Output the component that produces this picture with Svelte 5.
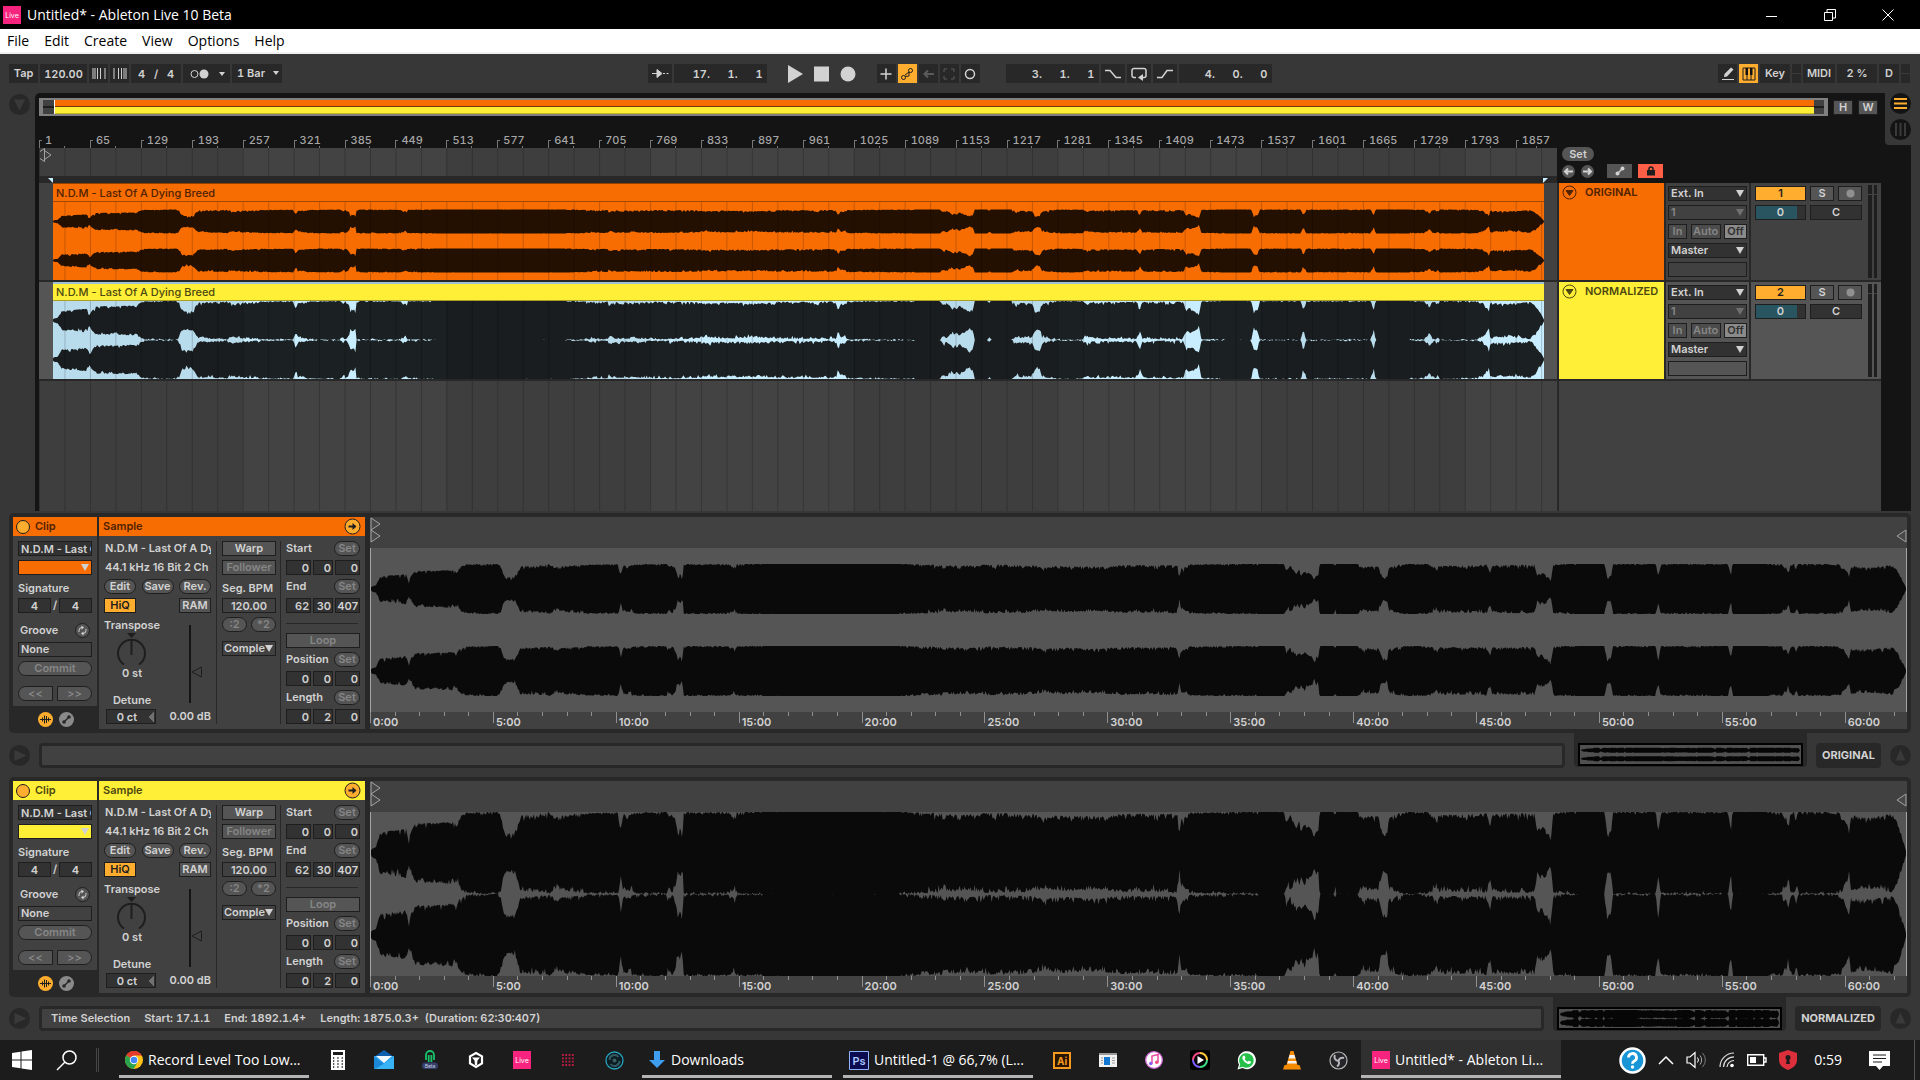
<script lang="ts">
    type ClipColor = 'orange' | 'yellow';

    interface Track {
        id: number;
        name: string;
        color: ClipColor;
        peak: number;
        status: string[];
    }

    const CLIP_NAME = 'N.D.M - Last Of A Dying Breed';

    const tracks: Track[] = [
        { id: 1, name: 'ORIGINAL', color: 'orange', peak: 25, status: [] },
        {
            id: 2,
            name: 'NORMALIZED',
            color: 'yellow',
            peak: 41,
            status: ['Time Selection', 'Start: 17.1.1', 'End: 1892.1.4+', 'Length: 1875.0.3+  (Duration: 62:30:407)']
        }
    ];

    const bars = Array.from({ length: 30 }, (_, i) => 1 + i * 64);
    const minutes = Array.from({ length: 63 }, (_, i) => i);
    const menu = ['File', 'Edit', 'Create', 'View', 'Options', 'Help'];

    // loudness envelope of the recording: [position, level]
    const END = 3086;
    const envelope = [
        [0, .05], [3, .1], [10, .13], [18, .5], [50, .54], [70, .6], [76, .3], [80, .5], [90, .72], [130, .72],
        [165, .76], [172, .68], [178, .87], [190, .97], [255, 1], [262, .9], [266, .55], [275, .47], [290, .5],
        [296, .75], [300, .92], [330, .93], [360, .98], [370, .86], [395, .93], [430, .97], [497, .98], [503, .6],
        [507, .93], [520, .9], [525, .97], [594, 1], [600, .88], [606, .98], [612, .85], [616, .52], [622, .6],
        [626, .42], [628, .97], [640, .99], [720, .98], [730, .87], [735, .98], [790, 1], [870, 1], [1060, 1],
        [1100, .97], [1148, .96], [1152, .8], [1156, .93], [1200, .92], [1240, .96], [1300, .95], [1335, .93],
        [1350, .85], [1380, .91], [1400, .91], [1450, .88], [1470, .88], [1500, .94], [1548, .95], [1563, .92],
        [1608, .96], [1621, .95], [1625, .52], [1629, .85], [1640, .87], [1644, .97], [1698, .98], [1788, 1],
        [1836, 1], [1843, .78], [1848, .93], [1856, .75], [1863, .65], [1866, .8], [1870, .6], [1876, .8],
        [1883, .65], [1893, .55], [1897, .4], [1901, .6], [1904, .45], [1907, 1], [1935, 1], [1938, .92],
        [1941, 1], [1984, 1], [1995, .83], [2003, .9], [2026, .88], [2033, .5], [2043, .48], [2046, .88],
        [2063, .95], [2088, 1], [2131, .98], [2138, .87], [2142, .82], [2148, .94], [2198, .93], [2243, .96],
        [2250, .62], [2254, .94], [2340, .96], [2345, .55], [2353, .65], [2363, .55], [2372, .36], [2377, .97],
        [2398, .98], [2428, 1], [2480, 1], [2485, .48], [2493, .54], [2497, .99], [2583, 1], [2588, .54],
        [2593, .99], [2638, .99], [2728, 1], [2734, .53], [2737, 1], [2808, 1], [2818, .98], [2838, .97],
        [2841, .85], [2845, .88], [2849, .65], [2854, .95], [2861, .98], [2866, .87], [2870, 1], [2948, .98],
        [2958, .94], [2965, .7], [2968, .7], [2972, .45], [2975, .92], [2993, .86], [3028, .87], [3058, .95],
        [3068, .75], [3078, .4], [END, .03]
    ];

    const noise = (n: number) => {
        const v = Math.sin(n * 12.9898) * 43758.5453;
        return v - Math.floor(v);
    };

    const level = (pos: number) => {
        let i = 1;
        while (i < envelope.length - 1 && envelope[i][0] < pos) i++;
        const [x0, y0] = envelope[i - 1];
        const [x1, y1] = envelope[i];
        return y0 + (y1 - y0) * Math.min(1, (pos - x0) / (x1 - x0));
    };

    // two channels in a box of 164 units, each with 41 units either side of its centre
    const buildWave = (points: number, peak: number) => {
        const edge = (center: number, dir: number, seed: number) =>
            Array.from({ length: points + 1 }, (_, i) => {
                const base = level((i / points) * END);
                const rough = base > .999 ? .03 : base > .97 ? .1 : base > .3 ? .2 : .02;
                const amp = Math.min(1, base + .02 - noise(i + seed) * noise(i * 3 + seed) * rough);
                return `${i} ${(center + dir * amp * peak).toFixed(1)}`;
            });
        const channel = (center: number, seed: number) =>
            `M${edge(center, -1, seed).join('L')}L${edge(center, 1, seed + 501).reverse().join('L')}Z`;

        return channel(41, 7) + channel(123, 1907);
    };

    const clipWaves = tracks.map((t) => buildWave(1218, t.peak));
    const sampleWaves = tracks.map((t) => buildWave(1536, t.peak));
    const thumbWaves = tracks.map((t) => buildWave(220, t.peak));
</script>

{#snippet waveform(d: string, width: number)}
    <svg class="wave" viewBox="0 0 {width} 164" preserveAspectRatio="none" aria-hidden="true">
        <path {d} />
    </svg>
{/snippet}

{#snippet grid(from: number, width: number)}
    <svg class="grid" viewBox="{from} 0 {width} 10" preserveAspectRatio="none" aria-hidden="true">
        {#each [0, 2, 4, 6] as n}
            <rect class="band" x={n * 203.7} y="0" width="203.7" height="10" opacity=".07" />
        {/each}
        {#each Array(60) as _, i}
            <rect x={i * 25.46} y="0" width="1" height="10" opacity=".2" />
        {/each}
    </svg>
{/snippet}

{#snippet picker(label: string, value: string, cls = '')}
    <span class="picker {cls}">
        <select aria-label={label}><option>{value}</option></select>
    </span>
{/snippet}

{#snippet triple(label: string, values: string[])}
    <div class="triple">
        {#each values as value, i}
            <input class="field" aria-label="{label} {i + 1}" {value} />
        {/each}
    </div>
{/snippet}

{#snippet heading(label: string)}
    <div class="line between">
        <span>{label}</span>
        <button class="pill off set">Set</button>
    </div>
{/snippet}

{#snippet live()}
    <svg width="18" height="18" viewBox="0 0 18 18" aria-hidden="true">
        <rect width="18" height="18" fill="#f7247f" />
        <text x="9" y="12" text-anchor="middle" font-size="7" font-family="Inter, sans-serif" fill="#fff">Live</text>
    </svg>
{/snippet}

<div class="app">
    <header class="titlebar">
        {@render live()}
        <h1>Untitled* - Ableton Live 10 Beta</h1>
        <button aria-label="Minimize"><svg width="12" height="12"><path d="M0 7.500h11" /></svg></button>
        <button aria-label="Restore"><svg width="12" height="12"><path d="M.5 3.500h8v8h-8zM3 3V.500h8.500V9H9" /></svg></button>
        <button aria-label="Close"><svg width="12" height="12"><path d="M.5.5l11 11M11.500.5l-11 11" /></svg></button>
    </header>

    <nav class="menubar">
        {#each menu as item}
            <button>{item}</button>
        {/each}
    </nav>

    <section class="toolbar">
        <div class="group">
            <button class="tool w29">Tap</button>
            <input class="tool w47 center" aria-label="Tempo" value="120.00" />
            <button class="tool w19" aria-label="Nudge down"><svg width="14" height="13"><path d="M1 1v11M3 1v11M5.500 1v11M8.500 1v11M13 1v11" /></svg></button>
            <button class="tool w19" aria-label="Nudge up"><svg width="14" height="13"><path d="M1 1v11M5.500 1v11M8.500 1v11M11 1v11M13 1v11" /></svg></button>
            <input class="tool w50 center" aria-label="Time signature" value="4   /   4" />
            <button class="tool w47 metro" aria-label="Metronome">
                <svg width="36" height="10" viewBox="0 0 36 10">
                    <circle cx="4.500" cy="5" r="3.500" fill="none" /><circle cx="14" cy="5" r="4.500" fill="#d2d2d2" stroke="none" />
                    <path d="M29 3h6l-3 4z" fill="#d2d2d2" stroke="none" />
                </svg>
            </button>
            <span class="picker flat w50"><select aria-label="Quantization"><option>1 Bar</option></select></span>
        </div>

        <div class="group">
            <button class="tool w24" aria-label="Follow"><svg width="18" height="11"><path d="M1 5.500h7M12 5.500h2M15.500 5.500h2" /><path d="M6 1.500l5 4-5 4z" fill="#d2d2d2" /></svg></button>
            <input class="tool w93 number" aria-label="Arrangement position" value="17.      1.      1" />
            <div class="transport">
                <button aria-label="Play"><svg width="16" height="18"><path d="M0 0l15 9-15 9z" /></svg></button>
                <button aria-label="Stop"><svg width="16" height="18"><path d="M0 1.500h15v15H0z" /></svg></button>
                <button aria-label="Record"><svg width="16" height="18"><circle cx="8" cy="9" r="7.500" /></svg></button>
            </div>
            <button class="tool w19" aria-label="Overdub"><svg width="12" height="12"><path d="M6 .5v11M.5 6h11" stroke-width="1.500" /></svg></button>
            <button class="tool w19 lit" aria-label="Automation arm"><svg width="14" height="14"><circle cx="3.500" cy="10.500" r="2" fill="none" /><circle cx="10.500" cy="3.500" r="2" fill="none" /><path d="M5 9.500L9 9V6l.5-1M5 8l4-3" fill="none" /></svg></button>
            <button class="tool w19 dim" aria-label="Re-enable automation"><svg width="11" height="10"><path d="M2 5h9M5 1.500L1.500 5 5 8.500" fill="none" stroke-width="2" /></svg></button>
            <button class="tool w19 dim" aria-label="Capture"><svg width="12" height="12"><path d="M1 4V1h3M8 1h3v3M11 8v3H8M4 11H1V8" fill="none" /></svg></button>
            <button class="tool w19" aria-label="Session record"><svg width="12" height="12"><circle cx="6" cy="6" r="4.500" fill="none" stroke-width="1.500" /></svg></button>
            <input class="tool w93 number loop-start" aria-label="Loop start" value="3.      1.      1" />
            <button class="tool w24" aria-label="Punch in"><svg width="16" height="10"><path d="M0 1.500h5l6 7h5" fill="none" stroke-width="1.500" /></svg></button>
            <button class="tool w24" aria-label="Loop"><svg width="16" height="14"><path d="M5 10.500H2.500a2 2 0 0 1-1.500-2V3a2 2 0 0 1 2-1.500h10A2 2 0 0 1 15 3v5.500a2 2 0 0 1-2 2h-3" fill="none" stroke-width="1.500" /><path d="M12 7l-5 3.500L12 14z" fill="#d2d2d2" stroke="none" /></svg></button>
            <button class="tool w24" aria-label="Punch out"><svg width="16" height="10"><path d="M0 8.500h5l5-7h6" fill="none" stroke-width="1.500" /></svg></button>
            <input class="tool w93 number" aria-label="Loop length" value="4.      0.      0" />
        </div>

        <div class="group end">
            <button class="tool w19" aria-label="Draw mode"><svg width="14" height="13"><path d="M1 12.500h12" /><path d="M3 10l.5-3L10 .5l2.500 2L6 9.500z" fill="#d2d2d2" stroke="none" /></svg></button>
            <button class="tool w19 lit" aria-label="Computer MIDI keyboard"><svg width="14" height="14"><path d="M1 1h12v12H1zM5 8v5M9 8v5" fill="none" /><path d="M3.500 1h2.500v7H3.500zM8 1h2.500v7H8z" fill="#111" stroke="none" /></svg></button>
            <button class="tool w30">Key</button>
            <span class="tool lamp"></span>
            <button class="tool w32">MIDI</button>
            <span class="tool w40">2 %</span>
            <button class="tool w20">D</button>
            <span class="tool lamp"></span>
        </div>
    </section>

    <main>
        <section class="arrangement">
            <aside class="gutter">
                <button class="disc" aria-label="Show browser"><svg width="21" height="21"><circle cx="10.500" cy="10.500" r="10.500" /><path d="M5 5.500h11l-5.500 11z" /></svg></button>
            </aside>
            <div class="canvas">
                <div class="top">
                    <div class="timeline">
                        <div class="overview-row">
                            <div class="overview">
                                <span class="handle"></span>
                                <span class="strips"><i></i><i></i></span>
                                <span class="handle right"></span>
                            </div>
                            <button class="square">H</button>
                            <button class="square">W</button>
                        </div>
                        <div class="ruler-row">
                            <div class="ruler">
                                <div class="bars">
                                    {#each bars as bar, i}
                                        <span class="bar" class:last={i === bars.length - 1}>{bar}</span>
                                    {/each}
                                </div>
                                <div class="scrub">
                                    {@render grid(0, 1518)}
                                    <svg class="insert" width="14" height="14"><path d="M1 3.500L5.500.5v13L1 10.500M5.500 2.500L12 7l-6.500 4.500" /></svg>
                                </div>
                                <div class="locators">
                                    <svg width="5" height="5"><path d="M0 0h5v5z" /></svg>
                                    <svg width="5" height="5"><path d="M0 0h5L0 5z" /></svg>
                                </div>
                            </div>
                            <div class="locator-tools">
                                <button class="set-locator">Set</button>
                                <div class="line">
                                    <button class="round" aria-label="Previous locator"><svg width="13" height="13"><circle cx="6.500" cy="6.500" r="6.500" /><path d="M3 6.500h8M6 3.500l-3 3 3 3" /></svg></button>
                                    <button class="round next" aria-label="Next locator"><svg width="13" height="13"><circle cx="6.500" cy="6.500" r="6.500" /><path d="M2 6.500h8M7 3.500l3 3-3 3" /></svg></button>
                                    <button class="flag" aria-label="Automation mode"><svg width="10" height="10"><path d="M2.500 7.500l5-5" stroke="#d2d2d2" stroke-width="1.500" /><circle cx="2.500" cy="7.500" r="2" fill="#d2d2d2" /><circle cx="7.500" cy="2.500" r="2" fill="#d2d2d2" /></svg></button>
                                    <button class="flag lock" aria-label="Lock envelopes"><svg width="10" height="10"><path d="M1 4h8v5.500H1z" fill="#1e1e1e" /><path d="M3 4.500V3a2 2 0 0 1 4 0v1.500" fill="none" stroke="#1e1e1e" stroke-width="1.500" /></svg></button>
                                </div>
                            </div>
                        </div>
                    </div>
                    <div class="view-switch">
                        <button class="disc" aria-label="Arrangement view"><svg width="21" height="21"><circle cx="10.500" cy="10.500" r="10.500" fill="#141414" /><path d="M4 6h13M4 10.500h13M4 15h13" stroke="#ffad2e" stroke-width="2" /></svg></button>
                        <button class="disc" aria-label="Session view"><svg width="21" height="21"><circle cx="10.500" cy="10.500" r="10.500" fill="#141414" /><path d="M6 4v13M10.500 4v13M15 4v13" stroke="#3a3a3a" stroke-width="2" /></svg></button>
                    </div>
                </div>

                <div class="tracks">
                    {#each tracks as track, i}
                        <div class="track {track.color}">
                            <div class="lane">
                                <article class="clip">
                                    <h2>{CLIP_NAME}</h2>
                                    <div class="body">
                                        {@render waveform(clipWaves[i], 1218)}
                                        {@render grid(14, 1491)}
                                    </div>
                                </article>
                            </div>
                            <div class="head">
                                <button class="fold" aria-label="Fold {track.name}"><svg width="15" height="15"><circle cx="7.500" cy="7.500" r="6.500" fill="none" /><path d="M4 5.500h7l-3.500 5z" /></svg></button>
                                <h3>{track.name}</h3>
                            </div>
                            <div class="io">
                                {@render picker('Input type', 'Ext. In')}
                                {@render picker('Input channel', '1', 'off')}
                                <div class="monitor">
                                    <button>In</button>
                                    <button>Auto</button>
                                    <button class="on">Off</button>
                                </div>
                                {@render picker('Output type', 'Master')}
                                <span class="empty"></span>
                            </div>
                            <div class="mixer">
                                <div class="controls">
                                    <button class="cell on">{track.id}</button>
                                    <button class="cell solo">S</button>
                                    <button class="cell solo arm" aria-label="Arm"><svg width="9" height="9"><circle cx="4.500" cy="4.500" r="4" fill="#909090" /></svg></button>
                                    <input class="cell volume" aria-label="Volume" value="0" />
                                    <input class="cell pan" aria-label="Pan" value="C" />
                                </div>
                                <span class="meter"></span>
                                <span class="meter"></span>
                            </div>
                        </div>
                    {/each}
                    <div class="rest">
                        <div class="space">{@render grid(0, 1518)}</div>
                        <div class="blank"></div>
                    </div>
                </div>
            </div>
        </section>

        {#each tracks as track, i}
            <section class="detail {track.color}">
                <div class="frame">
                    <div class="clip-column">
                        <div class="box clip-box">
                            <h2><span class="dot"></span>Clip</h2>
                            <div class="stack">
                                <input class="field left" aria-label="Clip name" value={CLIP_NAME} />
                                <span class="picker color"><select aria-label="Clip color"><option></option></select></span>
                                <div class="line low">Signature</div>
                                <div class="line between">
                                    <input class="field sig" aria-label="Numerator" value="4" />
                                    <span>/</span>
                                    <input class="field sig" aria-label="Denominator" value="4" />
                                </div>
                                <div class="line between groove">
                                    <span>Groove</span>
                                    <button class="round" aria-label="Hot-swap groove"><svg width="15" height="15"><circle cx="7.500" cy="7.500" r="7" fill="#555" stroke="#1e1e1e" /><path d="M4 9V7.500a3 3 0 0 1 3-3M11 6v1.500a3 3 0 0 1-3 3" fill="none" stroke="#d2d2d2" /><path d="M6.500 2.500l2.500 2-2.500 2zM8.500 8.500l-2.500 2 2.500 2z" fill="#d2d2d2" /></svg></button>
                                </div>
                                <button class="field plain left">None</button>
                                <button class="pill off">Commit</button>
                                <div class="line between nudge">
                                    <button class="pill off half">&lt;&lt;</button>
                                    <button class="pill off half flip">&gt;&gt;</button>
                                </div>
                            </div>
                        </div>
                        <div class="tabs">
                            <button class="round" aria-label="Sample box"><svg width="15" height="15"><circle cx="7.500" cy="7.500" r="7.500" fill="#ffad2e" /><path d="M2 7.500h11M4.500 5.500v4M6.500 3.500v8M8.500 4v7M10.500 5.500v4" stroke="#1e1e1e" /></svg></button>
                            <button class="round" aria-label="Envelopes box"><svg width="15" height="15"><circle cx="7.500" cy="7.500" r="7.500" fill="#8a8a8a" /><path d="M5 10l5-5" stroke="#282828" stroke-width="1.500" /><circle cx="5" cy="10" r="1.800" fill="#282828" /><circle cx="10" cy="5" r="1.800" fill="#282828" /></svg></button>
                        </div>
                    </div>

                    <div class="box sample-box">
                        <h2>Sample
                            <svg class="unfold" width="17" height="17"><circle cx="8.500" cy="8.500" r="7.500" fill="#ffad2e" stroke="#1e1e1e" /><path d="M4.500 8.500h6" stroke="#1e1e1e" stroke-width="2" /><path d="M8.500 5l4 3.500-4 3.500z" fill="#1e1e1e" /></svg>
                        </h2>
                        <div class="columns">
                            <div class="stack file">
                                <div class="line clipped">{CLIP_NAME}</div>
                                <div class="line clipped">44.1 kHz 16 Bit 2 Ch</div>
                                <div class="line between">
                                    <button class="pill w32">Edit</button>
                                    <button class="pill w32">Save</button>
                                    <button class="pill w32">Rev.</button>
                                </div>
                                <div class="line between">
                                    <button class="toggle w32 on">HiQ</button>
                                    <button class="toggle w32">RAM</button>
                                </div>
                                <div class="pitch">
                                    <div class="knobs">
                                        <span>Transpose</span>
                                        <svg width="32" height="33" viewBox="0 0 32 33" aria-hidden="true">
                                            <path d="M8 31.500A13.500 13.500 0 1 1 23 31.500" fill="none" stroke="#1e1e1e" stroke-width="2" />
                                            <path d="M15.500 6v16" stroke="#1e1e1e" stroke-width="2" />
                                            <path d="M11 0h9l-4.500 5z" fill="#1e1e1e" />
                                        </svg>
                                        <span>0 st</span>
                                        <span class="detune">Detune</span>
                                    </div>
                                    <svg class="gain" width="16" height="79" aria-hidden="true">
                                        <path d="M2 0v78" stroke="#141414" stroke-width="2" />
                                        <path d="M13.500 42v10L4 47z" fill="#414141" stroke="#1e1e1e" />
                                    </svg>
                                </div>
                                <div class="line between">
                                    <input class="field plain cents" aria-label="Detune" value="0 ct" />
                                    <span>0.00 dB</span>
                                </div>
                            </div>
                            <div class="stack warp">
                                <button class="toggle">Warp</button>
                                <button class="toggle off">Follower</button>
                                <div class="line low">Seg. BPM</div>
                                <input class="field plain" aria-label="Segment BPM" value="120.00" />
                                <div class="line between">
                                    <button class="pill off w25">:2</button>
                                    <button class="pill off w25">*2</button>
                                </div>
                                <div class="gap"></div>
                                {@render picker('Warp mode', 'Complex', 'tight')}
                            </div>
                            <div class="stack region">
                                {@render heading('Start')}
                                {@render triple('Start', ['0', '0', '0'])}
                                {@render heading('End')}
                                {@render triple('End', ['62', '30', '407'])}
                                <hr />
                                <button class="toggle off">Loop</button>
                                {@render heading('Position')}
                                {@render triple('Position', ['0', '0', '0'])}
                                {@render heading('Length')}
                                {@render triple('Length', ['0', '2', '0'])}
                            </div>
                        </div>
                    </div>

                    <div class="display">
                        <div class="markers">
                            <svg width="12" height="26"><path d="M1 1l9 6-9 6zM1 13l9 6-9 6z" /></svg>
                            <svg width="12" height="26"><path d="M11 13l-9 6 9 6z" /></svg>
                        </div>
                        <div class="sample">
                            {@render waveform(sampleWaves[i], 1536)}
                        </div>
                        <div class="time">
                            {#each minutes as minute}
                                <span class:major={minute % 5 === 0} class:last={minute === 62}>
                                    {#if minute % 5 === 0}{minute}:00{/if}
                                </span>
                            {/each}
                        </div>
                    </div>
                </div>

                <div class="status-row">
                    <button class="disc" aria-label="Show info"><svg width="21" height="21"><circle cx="10.500" cy="10.500" r="10.500" /><path d="M5.500 5v11l12-5.500z" /></svg></button>
                    <p class="status">
                        {#each track.status as part}
                            <span>{part}</span>
                        {/each}
                    </p>
                    <div class="thumb-tab">
                        <div class="thumb">{@render waveform(thumbWaves[i], 220)}</div>
                    </div>
                    <button class="name">{track.name}</button>
                    <button class="disc" aria-label="Hide detail"><svg width="21" height="21"><circle cx="10.500" cy="10.500" r="10.500" /><path d="M5.500 15.500h10l-5-11z" /></svg></button>
                </div>
            </section>
        {/each}
    </main>

    <footer class="taskbar">
        <button class="start" aria-label="Start"><svg width="20" height="20"><path d="M0 3l8.500-1.200v7.700H0zM9.500 1.600L20 0v9.500H9.500zM0 10.500h8.500v7.700L0 17zM9.500 10.500H20V20L9.500 18.400z" fill="#fff" /></svg></button>
        <button class="find" aria-label="Search"><svg width="21" height="21"><circle cx="13.500" cy="7.500" r="6.500" fill="none" stroke="#fff" stroke-width="1.500" /><path d="M9 12L1 20" stroke="#fff" stroke-width="1.500" /></svg></button>
        <span class="rule"></span>
        <button class="task">
            <svg width="18" height="18" viewBox="0 0 18 18"><circle cx="9" cy="9" r="9" fill="#fbc116" /><path d="M9 9L1.200 4.500A9 9 0 0 1 16.800 4.500H9z" fill="#e33b2e" /><path d="M1.200 4.500A9 9 0 0 0 8.500 18l4-6.500L9 9z" fill="#2ba24c" /><circle cx="9" cy="9" r="4.200" fill="#fff" /><circle cx="9" cy="9" r="3.300" fill="#4285f4" /></svg>
            <span>Record Level Too Low...</span>
        </button>
        <button class="app-icon" aria-label="Calculator"><svg width="14" height="20"><path d="M0 0h14v20H0z" fill="#fff" /><path d="M2 2h10v3H2z" fill="#1c1c1c" /><path d="M2 8h10M2 11h10M2 14h10M2 17h10" stroke="#1c1c1c" stroke-width="1.300" stroke-dasharray="1.300 3" /></svg></button>
        <button class="app-icon" aria-label="Mail"><svg width="20" height="20"><path d="M0 7l10-7 10 7z" fill="#0f5fae" /><path d="M0 6h20v13H0z" fill="#2ba0ea" /><path d="M0 7l10 7L0 19z" fill="#1b87d6" /><path d="M20 7v12H2z" fill="#38b3f5" /><path d="M2 6h16l-8 7z" fill="#f4f9ff" /></svg></button>
        <button class="app-icon" aria-label="VPN beta"><svg width="18" height="20"><path d="M5 6V5a4 4 0 0 1 8 0v5M5 5v5M7.700 5v7M10.400 5v7" fill="none" stroke="#19c26b" stroke-width="1.800" /><rect x="1" y="12.500" width="16" height="6.500" rx="3.200" fill="#34406a" /><text x="9" y="17.500" text-anchor="middle" font-size="5" font-family="Inter, sans-serif" fill="#c6cce0">Beta</text></svg></button>
        <button class="app-icon" aria-label="Authenticator"><svg width="16" height="18"><path d="M8 2l6 3.400v7L8 16l-6-3.600v-7z" fill="none" stroke="#fff" stroke-width="2.200" /><path d="M4 6.500h8l-2.500 3L9 14H7l-.5-4.500z" fill="#fff" /></svg></button>
        <button class="app-icon" aria-label="Ableton Live">{@render live()}</button>
        <button class="app-icon" aria-label="Pads"><svg width="12" height="12"><path d="M0 1h12M0 4.300h12M0 7.700h12M0 11h12" stroke="#c01c42" stroke-width="1.800" stroke-dasharray="1.800 1.500" /></svg></button>
        <button class="app-icon" aria-label="Sync"><svg width="19" height="19"><circle cx="9.500" cy="9.500" r="8.500" fill="#0c1c22" stroke="#27a3bd" stroke-width="1.300" /><path d="M4.500 9a5 5 0 0 1 9-3M14.500 10a5 5 0 0 1-9 3" fill="none" stroke="#335963" stroke-width="2" /><circle cx="9.500" cy="9.500" r="2" fill="#3f5f68" /></svg></button>
        <button class="task">
            <svg width="18" height="18"><path d="M6 0h6v9h5l-8 8-8-8h5z" fill="#3f9df0" /></svg>
            <span>Downloads</span>
        </button>
        <button class="task">
            <svg width="20" height="19"><path d="M.5.5h19v18H.5z" fill="#0c0c50" stroke="#8fb4ff" /><text x="10" y="14" text-anchor="middle" font-size="11" font-weight="600" font-family="Inter, sans-serif" fill="#a9c6ff">Ps</text></svg>
            <span>Untitled-1 @ 66,7% (L...</span>
        </button>
        <button class="app-icon" aria-label="Illustrator"><svg width="18" height="17"><path d="M1 1h16v15H1z" fill="#2a1600" stroke="#f39a1f" stroke-width="2" /><text x="9" y="12.500" text-anchor="middle" font-size="10" font-weight="700" font-family="Inter, sans-serif" fill="#f39a1f">Ai</text></svg></button>
        <button class="app-icon" aria-label="Launcher"><svg width="18" height="14"><path d="M0 0h18v14H0z" fill="#f2f2f2" /><path d="M0 0h18v2H0z" fill="#9a9a9a" /><path d="M5 4h6v8H5z" fill="#1278d4" /><path d="M2 5h2M2 7.500h2M2 10h2M13 5h3M13 7.500h3M13 10h3" stroke="#9a9a9a" /></svg></button>
        <button class="app-icon" aria-label="iTunes"><svg width="18" height="18"><circle cx="9" cy="9" r="8.300" fill="#fff" stroke="#d56bd8" stroke-width="1.300" /><path d="M7 12.500V5l6-1.500V11" fill="none" stroke="#e8489c" stroke-width="1.500" /><circle cx="5.800" cy="12.500" r="1.800" fill="#8a5cf0" /><circle cx="11.800" cy="11.300" r="1.800" fill="#ee4b80" /></svg></button>
        <button class="app-icon" aria-label="Media player"><svg width="20" height="20"><rect width="20" height="20" rx="3" fill="#000" /><path d="M3 10a7 7 0 0 1 7-7" stroke="#ef4b83" stroke-width="2" fill="none" /><path d="M10 3a7 7 0 0 1 7 7" stroke="#ffc83d" stroke-width="2" fill="none" /><path d="M17 10a7 7 0 0 1-7 7" stroke="#3ddc84" stroke-width="2" fill="none" /><path d="M10 17a7 7 0 0 1-7-7" stroke="#7d5cff" stroke-width="2" fill="none" /><path d="M7.500 6l6.500 4-6.500 4z" fill="#fff" /></svg></button>
        <button class="app-icon" aria-label="WhatsApp"><svg width="19" height="19"><path d="M.5 18.500l1.500-5A9 9 0 1 1 5.500 17z" fill="#fff" /><path d="M2.200 16.800l1-3.500a7.300 7.300 0 1 1 2.600 2.500z" fill="#25c04a" /><path d="M6 5l1.500-.5 1 2.300-.8 1.200a5 5 0 0 0 3 2.700l1.200-1 2.100 1c0 2-2 2.500-3.500 2A9 9 0 0 1 5.500 8c-.3-1 0-2.300.5-3z" fill="#fff" /></svg></button>
        <button class="app-icon" aria-label="VLC"><svg width="18" height="19"><path d="M7.500 0h3l4 14h-11z" fill="#f48b00" /><path d="M6.500 4h5l1 3.500h-7zM5 10h8.200l.6 2.500H4.200z" fill="#f2f2f2" /><path d="M1.500 14h15l1.500 4.500H0z" fill="#f48b00" /></svg></button>
        <button class="app-icon" aria-label="OBS"><svg width="19" height="19"><circle cx="9.500" cy="9.500" r="8.500" fill="#26262a" stroke="#b8b8b8" stroke-width="1.200" /><path d="M6 4a4 4 0 0 0 3.500 6M15 7a4 4 0 0 0-5.500 3M8 15.500A4 4 0 0 0 9.500 10" fill="none" stroke="#b8b8b8" stroke-width="2" /></svg></button>
        <button class="task current">
            {@render live()}
            <span>Untitled* - Ableton Li...</span>
        </button>
        <div class="tray">
            <svg width="27" height="27"><circle cx="13.500" cy="13.500" r="12" fill="#1795d6" stroke="#fff" stroke-width="2.500" /><path d="M9.500 10.500a4 4 0 1 1 5.500 3.700c-1.200.6-1.500 1-1.500 2.600" fill="none" stroke="#fff" stroke-width="2.800" /><circle cx="13.500" cy="20" r="1.700" fill="#fff" /></svg>
            <svg width="16" height="10"><path d="M1 9l7-7 7 7" fill="none" stroke="#fff" stroke-width="1.500" /></svg>
            <svg width="21" height="18"><path d="M1 6h3l5-4.500v15L4 12H1z" fill="none" stroke="#fff" stroke-width="1.200" /><path d="M11.500 6.500a4 4 0 0 1 0 5" stroke="#fff" fill="none" /><path d="M14 4.500a7 7 0 0 1 0 9" stroke="#aaa" fill="none" /><path d="M16.500 2a10 10 0 0 1 0 14" stroke="#777" fill="none" /></svg>
            <svg width="16" height="16"><path d="M1 15A14 14 0 0 1 15 1M4.500 15A10.500 10.500 0 0 1 15 4.800M8 15a7 7 0 0 1 7-6.500" fill="none" stroke="#ddd" stroke-width="1.200" /><circle cx="13" cy="13.500" r="1.800" fill="#fff" /></svg>
            <svg width="20" height="12"><path d="M.7.7h16v10.600H.7zM17 4h2v4h-2" fill="none" stroke="#fff" stroke-width="1.400" /><path d="M3 3h6v6H3z" fill="#fff" /></svg>
            <svg width="18" height="20"><path d="M9 0l9 3v7c0 5-4 8-9 10-5-2-9-5-9-10V3z" fill="#dc2f3c" /><circle cx="9" cy="7.500" r="2.500" fill="#1c1c1c" /><path d="M8 8h2l1 6H7z" fill="#1c1c1c" /></svg>
            <time>0:59</time>
            <svg width="21" height="21"><path d="M0 1h21v15h-7l-3.500 4L7 16H0z" fill="#fff" /><path d="M4 5h13M4 8.500h13M4 12h9" stroke="#1c1c1c" /></svg>
            <span class="peek"></span>
        </div>
    </footer>
</div>

<style>
    :global(body) {
        margin: 0;
        background: #373737;
    }

    .app {
        --panel: #414141;
        --dark: #282828;
        --line: #1e1e1e;
        --text: #d2d2d2;
        --lit: #ffad2e;

        display: flex;
        flex-direction: column;
        min-height: 100vh;
        background: #373737;
        color: var(--text);
        font: 600 11px/15px Inter, "Open Sans", sans-serif;
    }

    .app :global(*) {
        box-sizing: border-box;
    }

    h1, h2, h3, p {
        margin: 0;
        font: inherit;
    }

    button, input, select {
        margin: 0;
        padding: 0;
        border: 0;
        border-radius: 0;
        background: none;
        color: inherit;
        font: inherit;
        min-width: 0;
    }

    svg {
        display: block;
        flex: none;
    }

    .orange { --clip: #f86d02; --ink: #4f2200; }
    .yellow { --clip: #ffef36; --ink: #4d4810; }

    .w19 { width: 19px; }
    .w20 { width: 20px; }
    .w24 { width: 24px; }
    .w25 { width: 25px; }
    .w29 { width: 29px; }
    .w30 { width: 30px; }
    .w32 { width: 32px; }
    .w40 { width: 40px; }
    .w47 { width: 47px; }
    .w50 { width: 50px; }
    .w93 { width: 93px; }

    /* window chrome */
    .titlebar {
        display: flex;
        align-items: center;
        height: 29px;
        padding: 0 3px;
        background: #000;
        color: #fff;
        font: 14px/20px "Open Sans", sans-serif;

        h1 {
            flex: 1;
            padding-left: 6px;
        }

        button {
            display: flex;
            justify-content: center;
            width: 58px;
        }

        path {
            fill: none;
            stroke: #fff;
        }
    }

    .menubar {
        display: flex;
        gap: 15px;
        height: 25px;
        padding: 0 7px;
        border-bottom: 2px solid #f0f0f0;
        background: #fff;
        color: #000;
        font: 14px/20px "Open Sans", sans-serif;
    }

    .toolbar {
        display: grid;
        grid-template-columns: 1fr auto 1fr;
        align-items: center;
        height: 39px;
        padding: 0 10px 0 9px;
        font-variant-numeric: tabular-nums;

        .group {
            display: flex;
            gap: 2px;
        }

        .end {
            justify-content: flex-end;
        }

        .transport {
            display: flex;
            gap: 10px;
            padding: 0 19px;
            align-items: center;
            fill: var(--text);
        }
    }

    .tool {
        display: flex;
        align-items: center;
        justify-content: center;
        height: 19px;
        background: var(--dark);
        stroke: var(--text);

        &.lit {
            background: var(--lit);
            stroke: #1e1e1e;
        }

        &.dim {
            stroke: #5a5a5a;
        }

        &.lamp {
            width: 9px;
            background: linear-gradient(var(--dark) 9px, #3a3a3a 9px 10px, var(--dark) 10px);
        }
    }

    .metro { padding-left: 3px; }

    .center { text-align: center; }

    .number {
        padding-right: 4px;
        text-align: right;
    }

    .loop-start { margin-left: 24px; }

    /* drop-downs */
    .picker {
        position: relative;
        display: block;
        height: 15px;
        border: 1px solid var(--line);
        background: #323232;

        select {
            display: block;
            width: 100%;
            height: 100%;
            padding: 0 14px 0 2px;
            appearance: none;
            line-height: 13px;
        }

        &::after {
            content: "";
            position: absolute;
            right: 2px;
            top: 3px;
            border: 4px solid transparent;
            border-top: 7px solid var(--text);
            border-bottom: 0;
            pointer-events: none;
        }

        &.off {
            background: #414141;
            color: #868686;
        }

        &.off::after {
            border-top-color: #707070;
        }

        &.flat {
            height: 19px;
            border: 0;
            background: var(--dark);
        }

        &.flat select {
            padding-left: 5px;
        }

        &.flat::after {
            right: 3px;
            top: 7px;
            border-width: 4px 3px 0;
        }

        &.color {
            background: var(--clip);
        }

        &.tight {
            background: #414141;
        }

        &.tight select {
            padding-right: 10px;
            padding-left: 1px;
            text-overflow: clip;
        }
    }

    /* arrangement */
    main {
        flex: 1;
        display: flex;
        flex-direction: column;
    }

    .arrangement {
        flex: 1;
        display: flex;
        padding: 0 9px 2px 0;
    }

    .gutter {
        width: 35px;
        padding: 1px 0 0 9px;
    }

    .disc {
        display: block;
        flex: none;
        width: 21px;
        height: 21px;
        fill: var(--dark);

        path {
            fill: #3a3a3a;
        }
    }

    .canvas {
        flex: 1;
        display: flex;
        flex-direction: column;
        min-width: 0;
        border-radius: 5px 5px 0 0;
        background: #141414;
    }

    .top {
        display: flex;
        height: 90px;
    }

    .timeline {
        flex: 1;
        display: flex;
        flex-direction: column;
        justify-content: space-between;
        padding: 5px 4px 0 4px;
    }

    .view-switch {
        width: 26px;
        height: 52px;
        padding: 0 0 0 5px;
        border-radius: 0 0 0 4px;
        background: #373737;

        .disc {
            margin-bottom: 5px;
        }
    }

    .overview-row {
        display: flex;
        align-items: center;
        gap: 5px;
        padding-right: 3px;

        .square {
            width: 20px;
            height: 15px;
            border: 1px solid var(--line);
            background: #555;
            line-height: 13px;
        }
    }

    .overview {
        flex: 1;
        display: flex;
        height: 18px;
        border: 2px solid #808080;

        .handle {
            width: 14px;
            border-left: 2px solid #808080;
            border-right: 1px solid #fff;
            background: linear-gradient(#414141 6px, #1e1e1e 6px 8px, #414141 8px);
        }

        .handle.right {
            width: 12px;
            border-right: 2px solid #808080;
            border-left: 0;
        }

        .strips {
            flex: 1;
            display: flex;
            flex-direction: column;
        }

        i {
            flex: 1;
            border-bottom: 1px solid #7a3400;
            background: #f86d02;
        }

        i + i {
            border-bottom-color: #c8bb20;
            background: #ffef36;
        }
    }

    .ruler-row {
        display: flex;
        gap: 2px;
    }

    .ruler {
        flex: 1;
        min-width: 0;
    }

    .bars {
        display: flex;
        color: #a5a5a5;
        font-weight: 500;
        font-variant-numeric: tabular-nums;

        .bar {
            flex: 64;
            width: 0;
            text-indent: 6px;
            background: linear-gradient(#777, #777) 0 7px / 1px 8px no-repeat, linear-gradient(#777, #777) 0 7px / 3px 1px no-repeat,
                linear-gradient(#777, #777) 50% 13px / 1px 2px no-repeat;
        }

        .bar.last {
            flex: 52;
        }
    }

    .scrub {
        position: relative;
        height: 28px;
        background: #434343;
    }

    .insert {
        position: absolute;
        top: 0;
        left: 0;
        fill: none;
        stroke: #a5a5a5;
    }

    .grid {
        position: absolute;
        inset: 0;
        width: 100%;
        height: 100%;
        pointer-events: none;
    }

    .locators {
        display: flex;
        justify-content: space-between;
        height: 7px;
        padding: 2px 9px 0 9px;
        background: var(--dark);
        fill: #c8edff;
    }

    .locator-tools {
        width: 322px;
        padding: 14px 0 0 3px;

        .set-locator {
            display: block;
            width: 32px;
            height: 14px;
            margin-bottom: 3px;
            border-radius: 7px;
            background: #555;
            line-height: 14px;
        }

        .line {
            display: flex;
            align-items: center;
            height: 14px;
        }

        .round {
            fill: #555;
            stroke: var(--text);
            stroke-width: 2;
        }

        .round circle {
            stroke: none;
        }

        .next {
            margin: 0 13px 0 6px;
        }

        .flag {
            display: flex;
            align-items: center;
            justify-content: center;
            width: 25px;
            height: 14px;
            background: #555;
        }

        .lock {
            margin-left: 6px;
            background: #ff5f47;
        }
    }

    .tracks {
        flex: 1;
        display: flex;
        flex-direction: column;
        gap: 2px;
        margin: 0 30px 0 4px;
        background: var(--dark);
    }

    .track, .rest {
        display: grid;
        grid-template-columns: 1fr 105px 83px 130px;
        gap: 2px;
    }

    .track {
        --lane: #414141;
        height: 97px;

        &.yellow {
            --lane: #555;
            --wave: #1b2022;
            --back: #c8edff;
        }

        &.orange {
            --wave: #241000;
            --back: #f86d02;
        }
    }

    .rest {
        flex: 1;

        .space {
            position: relative;
            background: #434343;
        }

        .blank {
            grid-column: span 3;
            background: #414141;
        }
    }

    .lane {
        display: flex;
        min-width: 0;
        padding: 0 13px 0 14px;
        background: var(--lane);
    }

    .clip {
        flex: 1;
        display: flex;
        flex-direction: column;
        min-width: 0;
        background: var(--clip);

        h2 {
            height: 19px;
            padding-left: 3px;
            border-top: 1px solid #0006;
            border-bottom: 1px solid #0005;
            color: var(--ink);
            font-weight: 500;
            line-height: 18px;
        }

        .body {
            position: relative;
            flex: 1;
            min-height: 0;
            background: var(--back);
            fill: var(--wave);
        }

        .grid {
            fill: #000;
        }
    }

    .orange .band {
        display: none;
    }

    .yellow .clip h2 {
        border-top: 2px solid #9fc3d4;
        line-height: 17px;
    }

    .wave {
        width: 100%;
        height: 100%;
    }

    .clip .wave {
        position: absolute;
        inset: 0;
    }

    .head {
        display: flex;
        align-items: flex-start;
        gap: 8px;
        padding: 2px 3px;
        background: var(--clip);
        color: var(--ink);

        .fold {
            stroke: var(--ink);
            fill: var(--ink);
        }
    }

    .io, .mixer {
        background: var(--lane);
    }

    .io {
        display: flex;
        flex-direction: column;
        gap: 4px;
        padding: 3px 2px 0 2px;

        .empty {
            height: 15px;
            border: 1px solid var(--line);
        }
    }

    .monitor {
        display: grid;
        grid-template-columns: 19px 30px 23px;
        justify-content: space-between;

        button {
            height: 15px;
            border: 1px solid var(--line);
            background: #4c4c4c;
            color: #868686;
            line-height: 13px;
        }

        .on {
            background: #8a8a8a;
            color: #303030;
        }
    }

    .mixer {
        display: flex;
        gap: 2px;
        padding: 2px 4px;

        .controls {
            display: grid;
            grid-template-columns: 51px 24px 24px;
            grid-auto-rows: 15px;
            align-content: start;
            gap: 4px;
            padding: 1px 4px 0 0;
        }

        .cell {
            border: 1px solid var(--line);
            background: #323232;
            text-align: center;
            line-height: 13px;
        }

        .on {
            background: var(--lit);
            color: #1e1e1e;
        }

        .solo {
            display: flex;
            align-items: center;
            justify-content: center;
            background: #555;
        }

        .volume {
            background: linear-gradient(90deg, #285560 84%, #323232 84%);
        }

        .pan {
            grid-column: span 2;
        }

        .meter {
            width: 4px;
            background: linear-gradient(var(--line) 9px, #414141 9px 10px, var(--line) 10px);
        }
    }

    /* clip detail */
    .detail {
        padding: 0 9px;
    }

    .frame {
        display: flex;
        gap: 5px;
        padding: 4px;
        border-radius: 5px;
        background: var(--dark);
    }

    .clip-column {
        width: 84px;
        margin-right: -3px;
    }

    .box {
        background: var(--panel);

        h2 {
            display: flex;
            align-items: center;
            height: 19px;
            padding: 0 4px;
            background: var(--clip);
            color: var(--ink);
        }
    }

    .clip-box {
        height: 189px;

        h2 {
            gap: 5px;
            padding-left: 3px;
        }

        .stack {
            padding: 5px;
        }
    }

    .dot {
        width: 14px;
        height: 14px;
        border: 1px solid #1e1e1e;
        border-radius: 50%;
        background: var(--lit);
    }

    .tabs {
        display: flex;
        gap: 6px;
        justify-content: center;
        padding: 6px 0 0 2px;
    }

    .sample-box {
        width: 266px;

        .unfold {
            margin-left: auto;
        }
    }

    .stack {
        display: flex;
        flex-direction: column;
        gap: 4px;
    }

    .line {
        display: flex;
        align-items: center;
        height: 15px;
        white-space: pre;
    }

    .low {
        padding-top: 3px;
    }

    .between {
        justify-content: space-between;
    }

    .clipped {
        overflow: hidden;
        padding-left: 1px;
    }

    .groove {
        margin-top: 6px;
        padding: 0 2px;
    }

    .nudge {
        margin-top: 6px;
    }

    .field {
        height: 15px;
        width: 100%;
        border: 1px solid var(--line);
        background: #323232;
        line-height: 13px;
        text-align: center;

        &.left {
            padding-left: 2px;
            text-align: left;
        }

        &.plain {
            background: #414141;
        }

        &.sig {
            width: 33px;
        }

        &.cents {
            width: 50px;
            padding-right: 8px;
            margin-left: 2px;
            background: linear-gradient(to bottom right, transparent 50%, #707070 50%) 41px 2px / 6px 5px no-repeat,
                linear-gradient(to top right, transparent 50%, #707070 50%) 41px 7px / 6px 5px no-repeat, #323232;
        }
    }

    .pill, .toggle {
        height: 15px;
        border: 1px solid var(--line);
        background: #555;
        line-height: 13px;

        &.off {
            color: #868686;
        }

        &.on {
            background: var(--lit);
            color: #1e1e1e;
        }
    }

    .pill {
        border-radius: 8px;
    }

    .half {
        width: 35px;
        border-radius: 8px 0 0 8px;
    }

    .flip {
        border-radius: 0 8px 8px 0;
    }

    .set {
        width: 26px;
    }

    .columns {
        display: grid;
        grid-template-columns: 108px 54px 74px;
        gap: 10px;
        padding: 5px;
    }

    .file {
        padding-right: 1px;
    }

    .warp, .region {
        position: relative;

        &::before {
            content: "";
            position: absolute;
            top: 0;
            bottom: 0;
            left: -6px;
            width: 1px;
            background: #282828;
        }
    }

    .warp .gap {
        height: 1px;
    }

    .pitch {
        display: flex;
        justify-content: space-between;
        height: 88px;
        padding-right: 7px;
    }

    .knobs {
        display: flex;
        flex-direction: column;
        align-items: center;
        padding-top: 1px;

        .detune {
            margin-top: 12px;
        }
    }

    .gain {
        margin-top: 8px;
    }

    .triple {
        display: grid;
        grid-template-columns: 25px 20px 25px;
        gap: 2px;

        .field {
            padding-right: 1px;
            text-align: right;
        }
    }

    hr {
        width: 72px;
        height: 1px;
        margin: 6px 0 5px 0;
        border: 0;
        background: #282828;
    }

    .display {
        flex: 1;
        display: flex;
        flex-direction: column;
        min-width: 0;
        background: var(--panel);
    }

    .markers {
        display: flex;
        justify-content: space-between;
        height: 31px;
        fill: #484848;
        stroke: #a5a5a5;
    }

    .sample {
        flex: 1;
        height: 164px;
        border-left: 1px solid #a5a5a5;
        border-right: 1px solid #a5a5a5;
        background: #555;
        fill: #0a0a0a;
    }

    .time {
        display: flex;
        height: 17px;
        line-height: 21px;

        span {
            flex: 10;
            width: 0;
            height: 4px;
            border-left: 1px solid #909090;
            text-indent: 2px;
        }

        .major {
            height: 11px;
        }

        .last {
            flex: 5;
        }
    }

    .status-row {
        display: flex;
        align-items: center;
        height: 44px;
    }

    .yellow .status-row {
        height: 43px;
    }

    .status {
        flex: 1;
        display: flex;
        gap: 14px;
        height: 25px;
        margin: 0 9px;
        padding: 0 9px;
        border: 3px solid var(--dark);
        border-radius: 4px;
        background: var(--panel);
        font-variant-numeric: tabular-nums;
        line-height: 19px;
        white-space: pre;
    }

    .thumb-tab {
        align-self: flex-start;
        height: 34px;
        padding: 10px 4px 0 4px;
        border-radius: 0 0 4px 4px;
        background: var(--dark);
    }

    .thumb {
        width: 225px;
        height: 23px;
        padding: 1px;
        border: 2px solid #000;
        background: #505050;
        fill: #060606;
    }

    .name {
        height: 25px;
        margin: 0 9px;
        padding: 0 6px;
        border-radius: 4px;
        background: var(--dark);
        font-weight: 700;
    }

    /* taskbar */
    .taskbar {
        display: flex;
        align-items: center;
        height: 40px;
        background: #1c1c1c;
        color: #fff;
        font: 14px/20px "Open Sans", sans-serif;
    }

    .start {
        padding: 0 24px 0 12px;
    }

    .rule {
        width: 3px;
        height: 24px;
        margin: 0 15px 0 19px;
        border: 1px solid #444;
        border-width: 0 1px;
    }

    .task {
        display: flex;
        align-items: center;
        gap: 5px;
        width: 200px;
        height: 40px;
        margin-right: 1px;
        padding: 0 0 0 6px;
        border: 5px solid transparent;
        border-width: 0 5px;
        background: linear-gradient(#b4b4b4, #b4b4b4) 0 35px / 100% 3px no-repeat;
        white-space: nowrap;
    }

    .current {
        padding-left: 11px;
        border: 0;
        background-color: #303030;
    }

    .app-icon {
        display: flex;
        align-items: center;
        justify-content: center;
        width: 46px;
        height: 40px;
    }

    .tray {
        flex: 1;
        display: flex;
        align-items: center;
        justify-content: flex-end;
        gap: 12px;

        time {
            margin: 0 15px 0 5px;
        }
    }

    .peek {
        width: 6px;
        height: 40px;
        margin-left: 12px;
        border-left: 1px solid #555;
    }
</style>
